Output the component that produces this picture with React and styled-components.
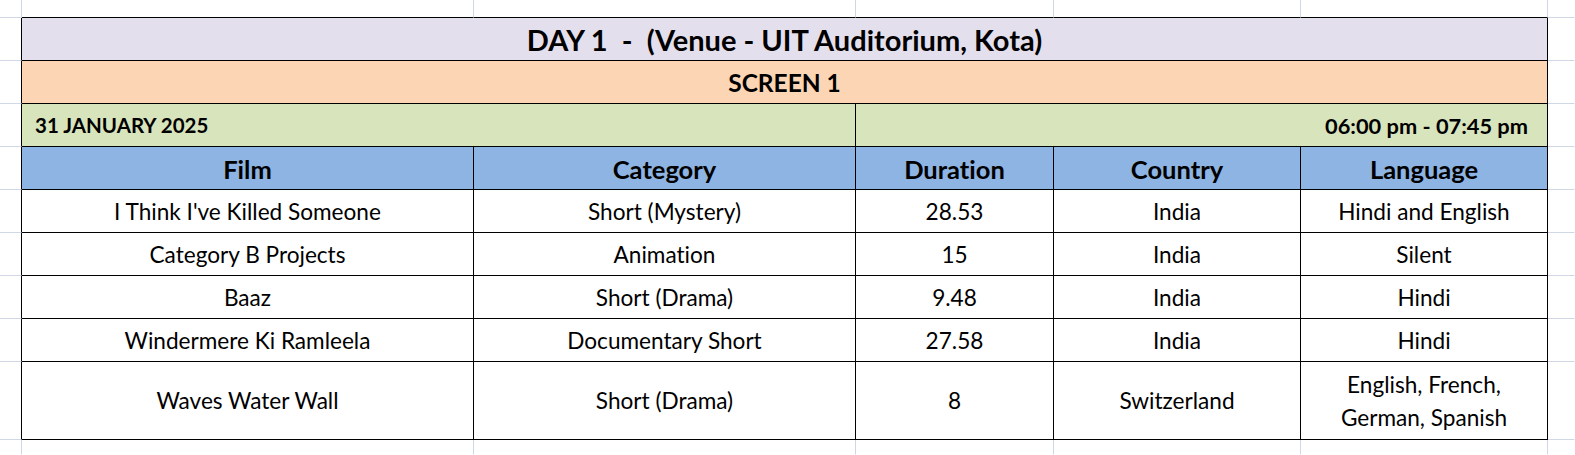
import React from 'react';
import styled, { createGlobalStyle } from 'styled-components';

const GlobalStyle = createGlobalStyle`
  html, body {
    margin: 0;
    padding: 0;
    background: #fff;
  }
  body {
    font-family: Lato, "Open Sans", sans-serif;
    font-variant-ligatures: none;
    color: #000;
  }
`;

const GRID = '#d0d7e5';
const INK = '#000';

const line = (v) => (v === 'ink' ? INK : v === 'grid' ? GRID : 'transparent');

// spreadsheet: gutter col, 5 table cols, gutter col
const Sheet = styled.div`
  display: grid;
  grid-template-columns: 22px 452px 382px 198px 247px 247px 1fr;
  grid-template-rows: 18px repeat(8, 43px) 78px 1fr;
  width: 100%;
  height: 455px;
  overflow: hidden;
`;

const Cell = styled.div`
  box-sizing: border-box;
  display: flex;
  align-items: center;
  justify-content: ${(p) => p.$align || 'center'};
  text-align: center;
  min-width: 0;
  border-right: 1px solid ${(p) => line(p.$r)};
  border-bottom: 1px solid ${(p) => line(p.$b)};
  background: ${(p) => p.$bg || '#fff'};
  grid-column: ${(p) => (p.$span ? `span ${p.$span}` : 'auto')};
`;

const TitleCell = styled(Cell)`
  font-size: 29px;
  font-weight: 700;
  white-space: pre;
  padding-top: 1px;
`;

const ScreenCell = styled(Cell)`
  font-size: 24.5px;
  font-weight: 700;
`;

const InfoCell = styled(Cell)`
  font-size: ${(p) => (p.$align === 'flex-end' ? '21.8px' : '20.5px')};
  font-weight: 700;
  padding: 0 ${(p) => (p.$align === 'flex-end' ? '19px' : '0')} 0
    ${(p) => (p.$align === 'flex-start' ? '13px' : '0')};
`;

const HeadCell = styled(Cell)`
  font-size: 25.5px;
  font-weight: 700;
  padding-top: 1px;
`;

const DataCell = styled(Cell)`
  font-size: 22.6px;
  line-height: 33px;
`;

const header = ['Film', 'Category', 'Duration', 'Country', 'Language'];

const films = [
  ["I Think I've Killed Someone", 'Short (Mystery)', '28.53', 'India', 'Hindi and English'],
  ['Category B Projects', 'Animation', '15', 'India', 'Silent'],
  ['Baaz', 'Short (Drama)', '9.48', 'India', 'Hindi'],
  ['Windermere Ki Ramleela', 'Documentary Short', '27.58', 'India', 'Hindi'],
  ['Waves Water Wall', 'Short (Drama)', '8', 'Switzerland', ['English, French,', 'German, Spanish']],
];

const Edge = ({ children }) => (
  <>
    <Cell $r="ink" $b="grid" />
    {children}
    <Cell $b="grid" />
  </>
);

const App = () => {
  return (
    <>
      <GlobalStyle />
      <Sheet>
        {/* row above the table */}
        <Cell $r="grid" $b="grid" />
        {header.map((h) => (
          <Cell key={`top${h}`} $r="grid" $b="ink" />
        ))}
        <Cell $b="grid" />

        <Edge>
          <TitleCell $span={5} $r="ink" $b="ink" $bg="#e4dfec">
            {'DAY 1  -  (Venue - UIT Auditorium, Kota)'}
          </TitleCell>
        </Edge>

        <Edge>
          <ScreenCell $span={5} $r="ink" $b="ink" $bg="#fcd5b4">
            SCREEN 1
          </ScreenCell>
        </Edge>

        <Edge>
          <InfoCell $span={2} $r="ink" $b="ink" $bg="#d8e4bc" $align="flex-start">
            31 JANUARY 2025
          </InfoCell>
          <InfoCell $span={3} $r="ink" $b="ink" $bg="#d8e4bc" $align="flex-end">
            06:00 pm - 07:45 pm
          </InfoCell>
        </Edge>

        <Edge>
          {header.map((h) => (
            <HeadCell key={h} $r="ink" $b="ink" $bg="#8db4e2">
              {h}
            </HeadCell>
          ))}
        </Edge>

        {films.map((row, i) => (
          <Edge key={`r${i}`}>
            {row.map((v, j) => (
              <DataCell key={j} $r="ink" $b="ink">
                {Array.isArray(v) ? (
                  <span>
                    {v[0]}
                    <br />
                    {v[1]}
                  </span>
                ) : (
                  v
                )}
              </DataCell>
            ))}
          </Edge>
        ))}

        {/* row below the table */}
        <Cell $r="grid" />
        {header.map((h) => (
          <Cell key={`bot${h}`} $r="grid" />
        ))}
        <Cell />
      </Sheet>
    </>
  );
};

export default App;
